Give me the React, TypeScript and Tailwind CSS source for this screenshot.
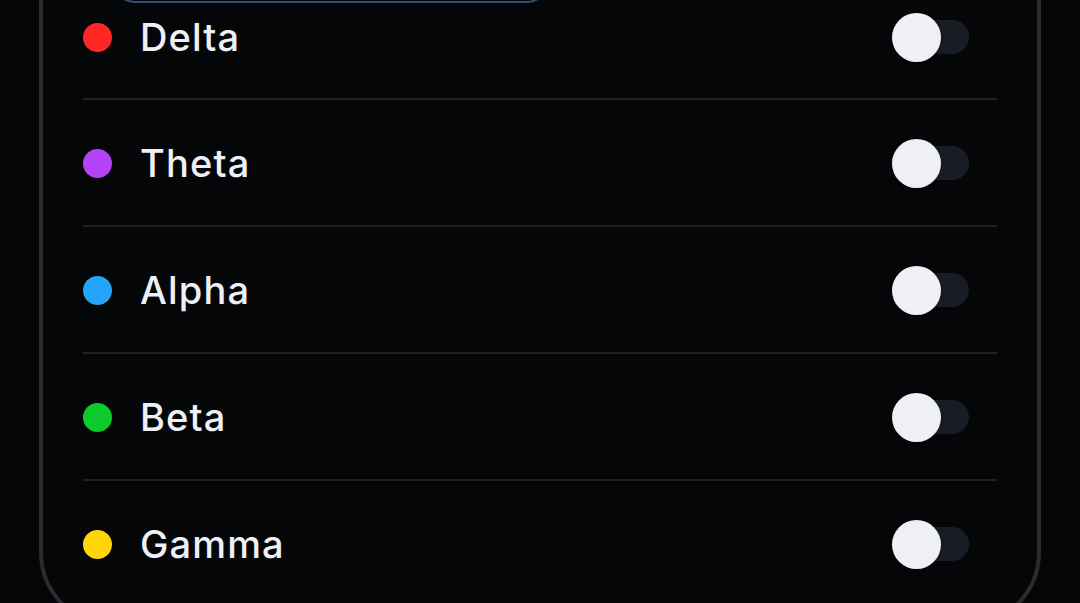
import React from "react";

const rows = [
  { name: "Delta", color: "bg-[#ff2626]" },
  { name: "Theta", color: "bg-[#b343f6]" },
  { name: "Alpha", color: "bg-[#25a4fb]" },
  { name: "Beta", color: "bg-[#0ccb2b]" },
  { name: "Gamma", color: "bg-[#ffd60a]" },
];

function Toggle() {
  return (
    <div className="relative mr-[28px] h-[49px] w-[77px] shrink-0">
      <div className="absolute right-0 top-[7px] h-[34px] w-[74px] rounded-full bg-[#191c25]" />
      <div className="absolute left-0 top-0 h-[49px] w-[49px] rounded-full bg-[#eef0f5] shadow-[0_1px_3px_rgba(0,0,0,0.4)]" />
    </div>
  );
}

export default function App() {
  return (
    <div
      className="h-[603px] overflow-hidden bg-[#050608]"
      style={{ fontFamily: "Inter, 'Noto Sans', sans-serif" }}
    >
      <div className="mx-[39px] -mt-[99px] rounded-[76px] border-4 border-[#2a2b2f] bg-[#050608] px-[40px] pb-[18px] pt-[38px]">
        <div className="ml-[30px] h-[60px] w-[436px] rounded-[22px] border-2 border-[#34507a]" />
        {rows.map((r, i) => (
          <div
            key={r.name}
            className={
              i === 0
                ? "flex h-[95px] items-center pb-[26px]"
                : "flex h-[127px] items-center border-t-2 border-[#1f2024] pt-[2px]"
            }
          >
            <div className={`h-[29px] w-[29px] shrink-0 rounded-full ${r.color}`} />
            <div className="ml-[28px] flex-1 text-[38px] font-medium tracking-[0.03em] text-[#eef0f7]">
              {r.name}
            </div>
            <Toggle />
          </div>
        ))}
      </div>
    </div>
  );
}
